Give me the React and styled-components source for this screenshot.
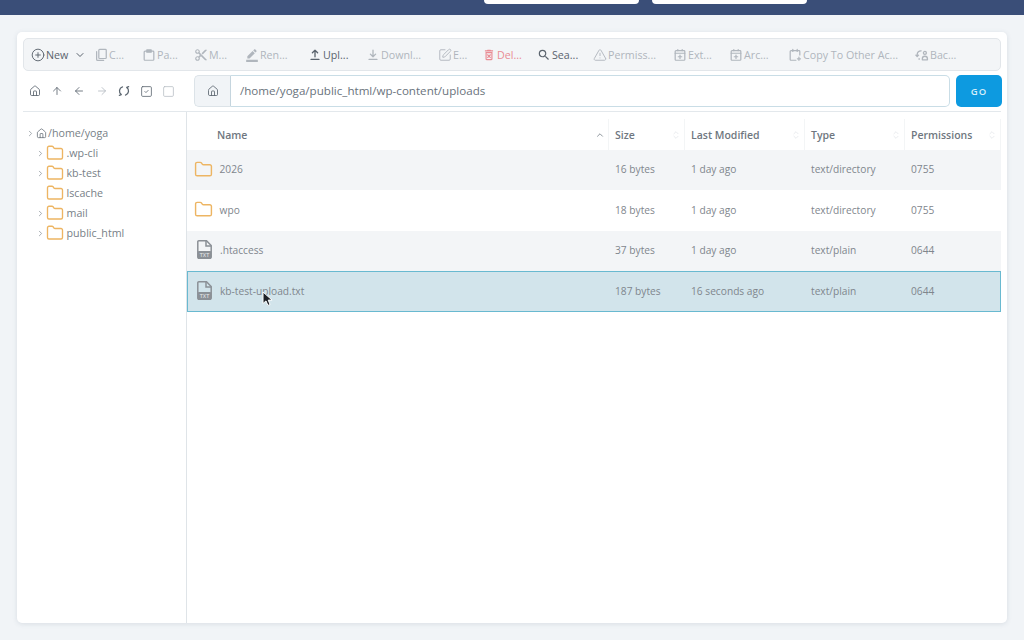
import React from "react";
import styled, { createGlobalStyle } from "styled-components";
import {
  CirclePlus, ChevronDown, ChevronRight, ChevronUp, SquarePen, TriangleAlert, House, ArrowUp, ArrowLeft,
  ArrowRight, SquareCheck, Square, Folder, ChevronsUpDown,
} from "lucide-react";
import { MdContentCut, MdBorderColor, MdOutlineDeleteForever, MdSearch } from "react-icons/md";

const Global = createGlobalStyle`
  html, body { margin: 0; padding: 0; height: 640px; overflow: hidden; background: #f1f4f7; }
  body { font-family: "Open Sans", "Liberation Sans", sans-serif; }
  * { box-sizing: border-box; }
`;

const Page = styled.div`
  width: 1024px;
  height: 640px;
  display: flex;
  flex-direction: column;
  background: #f1f4f7;
`;
const TopBar = styled.div`
  height: 15px;
  flex: none;
  background: #3a4e78;
  display: flex;
  align-items: flex-start;
  padding-left: 484px;
  gap: 13px;
`;
const TopButton = styled.div`
  width: 155px;
  height: 4px;
  background: #fff;
  border-radius: 0 0 5px 5px;
`;
const Card = styled.div`
  position: relative;
  margin: 17px 17px 0;
  width: 990px;
  height: 591px;
  background: #fff;
  border-radius: 5px;
  box-shadow: 0 1px 5px rgba(70, 90, 110, 0.14);
  padding: 6px 6px 0;
  display: flex;
  flex-direction: column;
`;
const Toolbar = styled.div`
  height: 33px;
  flex: none;
  background: #f3f5f7;
  border: 1px solid #e2e6ea;
  border-radius: 5px;
  display: flex;
  align-items: center;
  padding-left: 7px;
`;
const ToolItem = styled.div`
  width: ${(p) => p.$w}px;
  flex: none;
  display: flex;
  align-items: center;
  gap: 1px;
  font-size: 10.7px;
  white-space: nowrap;
  color: ${(p) => (p.$tone === "on" ? "#5a636d" : p.$tone === "danger" ? "#e98c94" : "#b0b6bd")};
  svg { flex: none; }
`;
const NavRow = styled.div`
  height: 32px;
  margin-top: 4px;
  flex: none;
  display: flex;
  align-items: center;
`;
const NavIcons = styled.div`
  width: 171px;
  flex: none;
  display: flex;
  align-items: center;
  padding-left: 6px;
`;
const NavIcon = styled.span`
  width: 22.2px;
  flex: none;
  display: flex;
  color: ${(p) => (p.$dim ? "#b5bbc2" : "#5c6670")};
`;
const PathAddon = styled.div`
  width: 37px;
  height: 32px;
  flex: none;
  background: #f1f4f7;
  border: 1px solid #dce3e8;
  border-right: 1px solid #c5d5de;
  border-radius: 5px 0 0 5px;
  display: flex;
  align-items: center;
  justify-content: center;
  color: #5c6670;
`;
const PathInput = styled.div`
  width: 719px;
  height: 32px;
  flex: none;
  border: 1px solid #c9dde6;
  border-left: none;
  border-radius: 0 5px 5px 0;
  display: flex;
  align-items: center;
  padding: 0 0 2px 9px;
  font-size: 11.6px;
  color: #6a737c;
`;
const GoButton = styled.div`
  width: 46px;
  height: 32px;
  margin-left: 6px;
  flex: none;
  background: #0d9ae0;
  border-radius: 5px;
  color: #d5eefa;
  font-size: 9.5px;
  font-weight: 600;
  letter-spacing: 1px;
  display: flex;
  align-items: center;
  justify-content: center;
`;
const Body = styled.div`
  flex: 1;
  margin-top: 4px;
  border-top: 1px solid #e3e8ec;
  display: flex;
  min-height: 0;
`;
const Tree = styled.div`
  width: 170px;
  flex: none;
  margin-left: -6px;
  padding-top: 11px;
  border-right: 1px solid #dfe4e8;
`;
const TreeRow = styled.div`
  height: 20px;
  display: flex;
  align-items: center;
  padding-left: ${(p) => (p.$root ? 9 : 19)}px;
  font-size: 10.7px;
  color: #787f87;
`;
const TreeChevron = styled.span`
  width: 10px;
  flex: none;
  display: flex;
  color: #8a929a;
`;
const TreeHome = styled.span`
  display: flex;
  margin-right: 1px;
  color: #666f78;
`;
const TreeFolder = styled.span`
  display: flex;
  margin-right: 2.5px;
`;
const Table = styled.div`
  width: 814px;
  flex: none;
  display: flex;
  flex-direction: column;
`;
const columns = "422px 76px 120px 100px 96px";
const HeadRow = styled.div`
  height: 38px;
  padding-top: 7px;
  flex: none;
  display: grid;
  grid-template-columns: ${columns};
`;
const HeadCell = styled.div`
  position: relative;
  display: flex;
  align-items: center;
  padding-left: ${(p) => p.$pad ?? 6}px;
  font-size: 10.5px;
  font-weight: 600;
  color: #6f7780;
  border-right: 1px solid #f3f5f6;
`;
const Sort = styled.span`
  position: absolute;
  right: 3px;
  top: 50%;
  transform: translateY(-50%);
  display: flex;
  color: ${(p) => (p.$on ? "#8f979e" : "#e4e7ea")};
`;
const Row = styled.div`
  height: ${(p) => (p.$sel ? 41 : 40.4)}px;
  padding-bottom: 2px;
  flex: none;
  display: grid;
  grid-template-columns: ${columns};
  align-items: center;
  font-size: 10.2px;
  color: #7f868d;
  background: ${(p) => (p.$sel ? "#d2e4eb" : p.$odd ? "#f3f5f7" : "#fff")};
  box-shadow: ${(p) => (p.$sel ? "inset 0 0 0 1px #69b9d0" : "none")};
`;
const NameCell = styled.div`
  display: flex;
  align-items: center;
  padding-left: ${(p) => (p.$file ? 10 : 6.5)}px;
  gap: ${(p) => (p.$file ? 8 : 7)}px;
`;
const Cell = styled.div`
  padding-left: 6px;
`;
const FolderIcon = styled(Folder)`
  color: #edb563;
  flex: none;
`;
const CursorMark = styled.svg`
  position: absolute;
  left: 245px;
  top: 259px;
`;

const Glyph = ({ size = 14, sw = 1.4, children }) => (
  <svg width={size} height={size} viewBox="0 0 16 16" fill="none" stroke="currentColor" strokeWidth={sw} strokeLinecap="round" strokeLinejoin="round">
    {children}
  </svg>
);
const CopyGlyph = () => (
  <Glyph>
    <rect x="5.5" y="1.5" width="8.5" height="10.5" rx="1" />
    <path d="M3 4v9a1.2 1.2 0 0 0 1.2 1.2H11" />
  </Glyph>
);
const PasteGlyph = () => (
  <Glyph>
    <rect x="2.5" y="3.5" width="11" height="10.5" rx="1" />
    <path d="M5.5 2.2h5v2.6h-5Z" fill="currentColor" />
  </Glyph>
);
const UploadGlyph = () => (
  <Glyph sw={1.5}>
    <path d="M8 2.5V10M5 5.5l3-3 3 3M3.5 13h9" />
  </Glyph>
);
const DownloadGlyph = () => (
  <Glyph sw={1.5}>
    <path d="M8 2.5V10M5 7l3 3 3-3M3.5 13h9" />
  </Glyph>
);
const BoxPlusGlyph = () => (
  <Glyph>
    <rect x="2.5" y="3" width="11" height="11" rx="1" />
    <path d="M2.5 6h11M5.5 1.8V3M10.5 1.8V3M8 8v4M6 10h4" />
  </Glyph>
);
const CopyOtherGlyph = () => (
  <Glyph>
    <path d="M9 14H3.5a1 1 0 0 1-1-1V4a1 1 0 0 1 1-1h9a1 1 0 0 1 1 1v4" />
    <path d="M5.5 1.5V4M10.5 1.5V4M12.5 10.5v3.6M10.7 12.3h3.6" />
  </Glyph>
);
const BackupGlyph = () => (
  <Glyph sw={1.5}>
    <path d="M7 3.2A4.3 4.3 0 0 0 2.5 7.5v2M1 8.2l1.5 1.6L4 8.2M5 12.6h-.5" />
    <circle cx="11.3" cy="5.6" r="1.7" />
    <path d="M8.4 13.5v-1.2a2.9 2.9 0 0 1 5.8 0v1.2Z" />
  </Glyph>
);
const SyncGlyph = () => (
  <Glyph size={12} sw={1.7}>
    <path d="M6 2.6A5.6 5.6 0 0 0 4.4 12.6M2.4 10.4l2 2.4-2.6 1" />
    <path d="M10 13.4A5.6 5.6 0 0 0 11.6 3.4M13.6 5.6l-2-2.4 2.6-1" />
  </Glyph>
);

const lucide = (Icon, props) => () => <Icon size={14} strokeWidth={1.6} {...props} />;
const md = (Icon) => () => <Icon size={14} />;

const tools = [
  { w: 63, Icon: lucide(CirclePlus), label: "New", tone: "on", caret: true },
  { w: 48, Icon: CopyGlyph, label: "C..." },
  { w: 52, Icon: PasteGlyph, label: "Pa..." },
  { w: 51, Icon: md(MdContentCut), label: "M..." },
  { w: 63, Icon: md(MdBorderColor), label: "Ren..." },
  { w: 58, Icon: UploadGlyph, label: "Upl...", tone: "on" },
  { w: 72, Icon: DownloadGlyph, label: "Downl..." },
  { w: 44, Icon: lucide(SquarePen), label: "E..." },
  { w: 55, Icon: md(MdOutlineDeleteForever), label: "Del...", tone: "danger" },
  { w: 56, Icon: md(MdSearch), label: "Sea...", tone: "on" },
  { w: 80, Icon: lucide(TriangleAlert), label: "Permiss..." },
  { w: 56, Icon: BoxPlusGlyph, label: "Ext..." },
  { w: 59, Icon: BoxPlusGlyph, label: "Arc..." },
  { w: 127, Icon: CopyOtherGlyph, label: "Copy To Other Ac..." },
  { w: 50, Icon: BackupGlyph, label: "Bac..." },
];

const navIcons = [
  { Icon: lucide(House, { size: 12, strokeWidth: 1.7 }) },
  { Icon: lucide(ArrowUp, { size: 12, strokeWidth: 1.7 }) },
  { Icon: lucide(ArrowLeft, { size: 12, strokeWidth: 1.7 }) },
  { Icon: lucide(ArrowRight, { size: 12, strokeWidth: 1.7 }), dim: true },
  { Icon: SyncGlyph },
  { Icon: lucide(SquareCheck, { size: 13, strokeWidth: 1.5 }) },
  { Icon: lucide(Square, { size: 13, strokeWidth: 1.4 }), dim: true },
];

const treeItems = [
  { name: ".wp-cli", more: true },
  { name: "kb-test", more: true },
  { name: "lscache", more: false },
  { name: "mail", more: true },
  { name: "public_html", more: true },
];

const rows = [
  { name: "2026", size: "16 bytes", mod: "1 day ago", type: "text/directory", perm: "0755", dir: true, odd: true },
  { name: "wpo", size: "18 bytes", mod: "1 day ago", type: "text/directory", perm: "0755", dir: true },
  { name: ".htaccess", size: "37 bytes", mod: "1 day ago", type: "text/plain", perm: "0644", odd: true },
  { name: "kb-test-upload.txt", size: "187 bytes", mod: "16 seconds ago", type: "text/plain", perm: "0644", sel: true },
];

const TxtIcon = () => (
  <svg width="15" height="19" viewBox="0 0 15 19" style={{ flex: "none" }}>
    <path d="M1.8.8h7.7l4.7 4.8V17a1.4 1.4 0 0 1-1.4 1.4H2.2A1.4 1.4 0 0 1 .8 17V1.8a1 1 0 0 1 1-1Z" fill="none" stroke="#8b9096" strokeWidth="1.5" />
    <path d="M9 1v5h5" fill="none" stroke="#8b9096" strokeWidth="1.5" />
    <rect x=".8" y="11" width="13.4" height="7.4" rx="1" fill="#8b9096" />
    <text x="7.5" y="16.7" textAnchor="middle" fontSize="5" fontWeight="700" fill="#d5d8db" fontFamily="Liberation Sans, sans-serif">TXT</text>
  </svg>
);

export default function App() {
  return (
    <Page>
      <Global />
      <TopBar>
        <TopButton />
        <TopButton />
      </TopBar>
      <Card>
        <Toolbar>
          {tools.map(({ w, Icon, label, tone, caret }) => (
            <ToolItem key={label} $w={w} $tone={tone}>
              <Icon />
              {label}
              {caret && <ChevronDown size={12} strokeWidth={2} style={{ marginLeft: 5 }} />}
            </ToolItem>
          ))}
        </Toolbar>
        <NavRow>
          <NavIcons>
            {navIcons.map(({ Icon, dim }, i) => (
              <NavIcon key={i} $dim={dim}>
                <Icon />
              </NavIcon>
            ))}
          </NavIcons>
          <PathAddon>
            <House size={12} strokeWidth={1.7} />
          </PathAddon>
          <PathInput>/home/yoga/public_html/wp-content/uploads</PathInput>
          <GoButton>GO</GoButton>
        </NavRow>
        <Body>
          <Tree>
            <TreeRow $root>
              <TreeChevron>
                <ChevronRight size={9} strokeWidth={2} />
              </TreeChevron>
              <TreeHome>
                <House size={11} strokeWidth={1.7} />
              </TreeHome>
              /home/yoga
            </TreeRow>
            {treeItems.map((t) => (
              <TreeRow key={t.name}>
                <TreeChevron>{t.more && <ChevronRight size={9} strokeWidth={2} />}</TreeChevron>
                <TreeFolder>
                  <FolderIcon size={18} strokeWidth={1.8} />
                </TreeFolder>
                {t.name}
              </TreeRow>
            ))}
          </Tree>
          <Table>
            <HeadRow>
              <HeadCell $pad={30}>
                Name
                <Sort $on><ChevronUp size={10} strokeWidth={2.4} /></Sort>
              </HeadCell>
              {["Size", "Last Modified", "Type", "Permissions"].map((h) => (
                <HeadCell key={h}>
                  {h}
                  <Sort><ChevronsUpDown size={10} strokeWidth={2} /></Sort>
                </HeadCell>
              ))}
            </HeadRow>
            {rows.map((r) => (
              <Row key={r.name} $odd={r.odd} $sel={r.sel}>
                <NameCell $file={!r.dir}>
                  {r.dir ? <FolderIcon size={19} strokeWidth={1.8} /> : <TxtIcon />}
                  {r.name}
                </NameCell>
                <Cell>{r.size}</Cell>
                <Cell>{r.mod}</Cell>
                <Cell>{r.type}</Cell>
                <Cell>{r.perm}</Cell>
              </Row>
            ))}
          </Table>
        </Body>
        <CursorMark width="11" height="16" viewBox="0 0 11 16">
          <path d="M1 1v11.5l3-2.6 1.9 4.5 2.2-.9-1.9-4.4h3.9Z" fill="#1d2126" stroke="#fff" strokeWidth="1" />
        </CursorMark>
      </Card>
    </Page>
  );
}
